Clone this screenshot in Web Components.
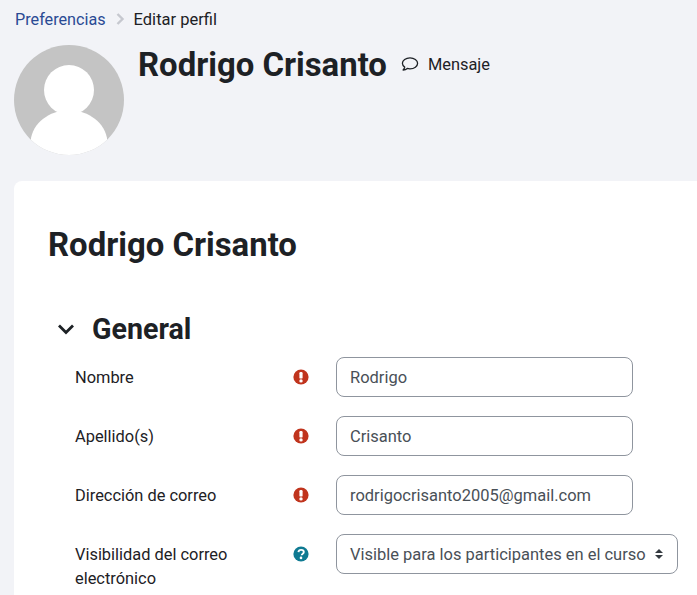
<!DOCTYPE html>
<html lang="es"><head><meta charset="utf-8"><title>Editar perfil</title>
<style>
html,body{margin:0;padding:0;height:595px;overflow:hidden;background:#f2f3f7;}
body{font-family:Roboto,"Liberation Sans",sans-serif;color:#1d2125;font-size:16.4px;}
</style></head><body>
<page-head></page-head>
<form-card></form-card>
<script>
const icons={
 req:'<svg width="16" height="16" viewBox="0 0 16 16"><circle cx="8" cy="8" r="7.6" fill="#c0341d"/><rect x="6.4" y="3" width="3.2" height="6.6" rx="1.2" fill="#fff"/><circle cx="8" cy="11.9" r="1.7" fill="#fff"/></svg>',
 help:'<svg width="16" height="16" viewBox="0 0 16 16"><circle cx="8" cy="8" r="7.6" fill="#0f7a92"/><path d="M5.4 6.1C5.6 4.6 6.7 3.9 8.1 3.9c1.5 0 2.7.9 2.7 2.2 0 1-.6 1.5-1.3 1.9-.6.4-.8.6-.8 1.2" fill="none" stroke="#fff" stroke-width="1.9"/><circle cx="8" cy="11.9" r="1.3" fill="#fff"/></svg>'
};
class PageHead extends HTMLElement{constructor(){super();this.attachShadow({mode:'open'}).innerHTML=`<style>
:host{display:block;height:181px;padding:0 0 0 14px;box-sizing:border-box}
nav{display:flex;align-items:center;height:38px;padding-left:1px;gap:9px}
nav a{font-size:16.2px}
nav span{font-size:16.5px}
a{color:#2a4a94;text-decoration:none}
.top{display:flex;align-items:flex-start;margin-top:7px}
.av{width:110px;height:110px;flex:none}
h1{margin:0 0 0 14px;font-size:32.9px;font-weight:700;line-height:40px;white-space:nowrap}
.msg{display:flex;align-items:center;gap:9px;margin:0 0 0 14px;height:38px}
</style>
<nav><a href="#">Preferencias</a><svg width="10" height="12" viewBox="0 0 10 12"><path d="M2.500 1 7.500 6 2.500 11" fill="none" stroke="#c6c8cf" stroke-width="2.400"/></svg><span>Editar perfil</span></nav>
<div class="top">
<svg class="av" viewBox="0 0 110 110"><defs><clipPath id="c"><circle cx="55" cy="55" r="55"/></clipPath></defs><circle cx="55" cy="55" r="55" fill="#c4c4c4"/><g clip-path="url(#c)" fill="#fff"><circle cx="55" cy="45" r="25"/><path d="M17 93C21 74 40 65 55 65s34 9 38 28L93 110H17Z"/></g></svg>
<h1>Rodrigo Crisanto</h1>
<div class="msg"><svg width="18" height="16" viewBox="0 0 18 16"><path d="M9 1.800c4.200 0 7.600 2.500 7.600 5.500s-3.400 5.500-7.600 5.500c-1 0-1.900-.1-2.700-.4-.9.800-2.300 1.500-4.200 1.600.8-.8 1.400-1.800 1.600-2.900C2.300 10.100 1.400 8.800 1.400 7.300c0-3 3.400-5.500 7.600-5.500Z" fill="none" stroke="#1d2125" stroke-width="1.300" stroke-linejoin="round"/></svg><span>Mensaje</span></div>
</div>`}}
customElements.define('page-head',PageHead);
class FormRow extends HTMLElement{constructor(){super();this.attachShadow({mode:'open'}).innerHTML=`<style>
:host{display:grid;grid-template-columns:218px 43px auto;align-items:start;min-height:59px}
.l{line-height:24px;padding-top:9px}
.i{padding-top:12px;height:16px}
</style><div class="l"><slot name="label"></slot></div><div class="i"><slot name="icon"></slot></div><div><slot></slot></div>`}}
customElements.define('form-row',FormRow);
class TextField extends HTMLElement{constructor(){super();this.attachShadow({mode:'open'}).innerHTML=`<style>
:host{display:flex;align-items:center;box-sizing:border-box;width:297px;height:40px;padding:0 13px;border:1px solid #8f959e;border-radius:8px;background:#fff;color:#495057;font-size:16.480px;white-space:nowrap}
</style><slot></slot>`}}
customElements.define('text-field',TextField);
class SelectField extends HTMLElement{constructor(){super();this.attachShadow({mode:'open'}).innerHTML=`<style>
:host{display:flex;align-items:center;justify-content:space-between;box-sizing:border-box;width:342px;height:40px;padding:0 13px;border:1px solid #8f959e;border-radius:8px;background:#fff;color:#495057;font-size:16.480px;white-space:nowrap}
</style><slot></slot><svg width="10" height="12" viewBox="0 0 10 12"><path d="M5 1 9 5H1ZM5 11 1 7H9Z" fill="#343a40"/></svg>`}}
customElements.define('select-field',SelectField);
class FormCard extends HTMLElement{constructor(){super();this.attachShadow({mode:'open'}).innerHTML=`<style>
:host{display:block;margin-left:14px;height:414px;background:#fff;border-radius:8px 0 0 0;padding:0 0 0 34px;overflow:hidden;box-sizing:border-box}
h2{margin:0;padding-top:44px;font-size:32.9px;line-height:40px;font-weight:700;white-space:nowrap}
.sec{display:flex;align-items:center;gap:17px;margin:44px 0 0 9px;height:40px}
h3{margin:0;font-size:28.600px;font-weight:700;line-height:40px}
.rows{margin:8px 0 0 27px}
</style><h2>Rodrigo Crisanto</h2>
<div class="sec"><svg width="18" height="12" viewBox="0 0 18 12"><path d="M2 2.500 9 9.500 16 2.500" fill="none" stroke="#1d2125" stroke-width="2.800"/></svg><h3>General</h3></div>
<div class="rows"><slot></slot></div>`}}
customElements.define('form-card',FormCard);
const card=document.querySelector('form-card');
card.innerHTML=[['Nombre','req','Rodrigo'],['Apellido(s)','req','Crisanto'],['Dirección de correo','req','rodrigocrisanto2005@gmail.com']].map(([l,i,v])=>`<form-row><span slot="label">${l}</span><span slot="icon">${icons[i]}</span><text-field>${v}</text-field></form-row>`).join('')+`<form-row><span slot="label">Visibilidad del correo<br>electrónico</span><span slot="icon">${icons.help}</span><select-field>Visible para los participantes en el curso</select-field></form-row>`;
</script></body></html>
